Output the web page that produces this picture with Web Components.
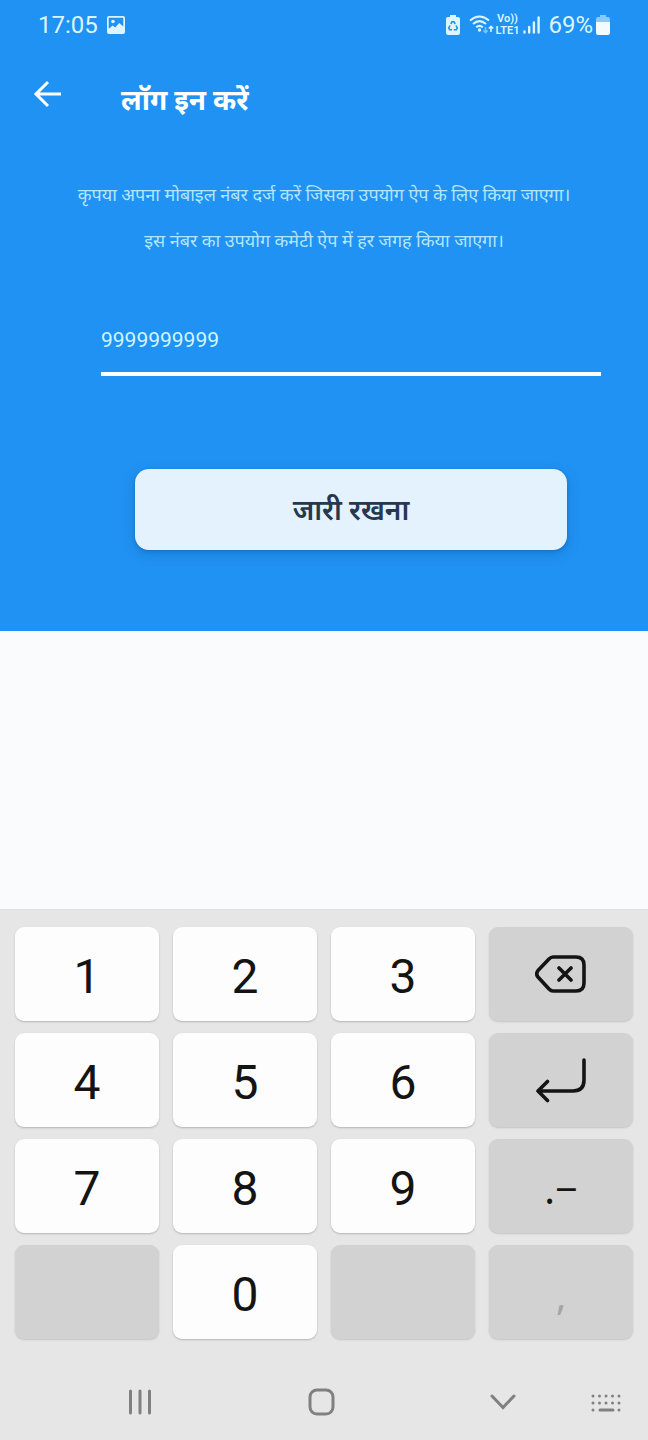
<!DOCTYPE html>
<html lang="hi">
<head>
<meta charset="utf-8">
<meta name="viewport" content="width=device-width, initial-scale=1">
<title>लॉग इन करें</title>
<style>
  html, body { margin: 0; min-height: 100%; }
  body { background: #fafbfd; font-family: Roboto, "Noto Sans Devanagari", "Noto Sans", sans-serif; }
</style>
</head>
<body>
<phone-screen>
  <status-bar slot="top"></status-bar>
  <page-header slot="top">लॉग इन करें</page-header>
  <login-form slot="top"></login-form>
  <num-pad slot="bottom"></num-pad>
  <nav-bar slot="bottom"></nav-bar>
</phone-screen>
<script>
  const define = (name, html, setup) => {
    const template = document.createElement('template');
    template.innerHTML = html;
    customElements.define(name, class extends HTMLElement {
      constructor() {
        super();
        this.attachShadow({ mode: 'open' }).append(template.content.cloneNode(true));
      }
      connectedCallback() { if (setup) setup(this); }
    });
  };

  define('phone-screen', `
    <style>
      :host { display: flex; flex-direction: column; min-height: 100vh; }
      header { background: #2092f3; color: #fff; padding-bottom: 81px; }
      main { flex: 1; }
      footer { background: #e6e6e6; border-top: 1px solid #dcdfe1; }
    </style>
    <header><slot name="top"></slot></header>
    <main></main>
    <footer><slot name="bottom"></slot></footer>`);

  define('status-bar', `
    <style>
      :host { display: flex; align-items: center; height: 50px; padding: 0 38px; color: #dcf5ff; font-size: 24px; line-height: 28px; }
      svg { display: block; flex: none; }
      .photo { margin-left: 9px; }
      .right { margin-left: auto; display: flex; align-items: center; }
      .wifi { margin-left: 9px; }
      .volte { display: flex; flex-direction: column; align-items: center; font-size: 11px; line-height: 12px; font-weight: 600; margin-left: 2px; }
      .signal { margin: 0 8px 0 4px; }
      .battery { margin-left: 3px; }
    </style>
    <span>17:05</span>
    <svg class="photo" width="18" height="18" viewBox="0 0 18 18"><path fill="currentColor" fill-rule="evenodd" d="M2 0h14a2 2 0 0 1 2 2v14a2 2 0 0 1-2 2H2a2 2 0 0 1-2-2V2a2 2 0 0 1 2-2zm-.3 1.7v11.1l4-3.300 2.500 2 4-4.500 4.100 3.600V1.700z"/><circle cx="6" cy="5.500" r="1.800" fill="currentColor"/></svg>
    <div class="right">
      <svg width="14" height="20" viewBox="0 0 14 20"><path fill="currentColor" d="M4 0h6v2h2a2 2 0 0 1 2 2v14a2 2 0 0 1-2 2H2a2 2 0 0 1-2-2V4a2 2 0 0 1 2-2h2z"/><g fill="none" stroke="#2092f3" stroke-width="1.600"><path d="M4.800 9 6 6.800h2L9.200 9"/><path d="M10 10.500 11.300 13l-1 1.800H7.800"/><path d="M4 10.500 2.700 13l1 1.800H6"/></g></svg>
      <svg class="wifi" width="25" height="20" viewBox="0 0 25 20"><g fill="none" stroke="currentColor" stroke-width="2"><path d="M1 5.500Q10.500-2.500 20 5.500"/><path d="M4 9Q10.500 3.300 17 9"/><path d="M7.200 12.300q3.300-2.900 6.600 0"/></g><circle cx="10.500" cy="15" r="1.700" fill="currentColor"/><g fill="none" stroke="currentColor" stroke-width="1.600"><path opacity=".5" d="M16.500 12v5.500m-2.200-2 2.200 2.200 2.200-2.200"/><path d="M22 17v-5.500m-2.200 2 2.200-2.200 2.200 2.200"/></g></svg>
      <span class="volte"><span>Vo))</span><span>LTE1</span></span>
      <svg class="signal" width="17" height="18" viewBox="0 0 17 18"><path stroke="currentColor" stroke-width="2.400" stroke-linecap="round" d="M1.500 15.500v1M6.200 11v5.500M10.900 6.500v10M15.600 1.500v15"/></svg>
      <span>69%</span>
      <svg class="battery" width="14" height="20" viewBox="0 0 14 20"><path fill="#8ac8fa" d="M4 0h6v2h2a2 2 0 0 1 2 2v4H0V4a2 2 0 0 1 2-2h2z"/><path fill="#f2fbff" d="M0 7h14v11a2 2 0 0 1-2 2H2a2 2 0 0 1-2-2z"/></svg>
    </div>`);

  define('page-header', `
    <style>
      :host { display: flex; align-items: center; height: 88px; padding-left: 33px; }
      button { display: block; padding: 0; border: 0; background: none; color: inherit; margin-right: 58px; }
      svg { display: block; }
      h1 { margin: 14px 0 0; font-size: 28px; line-height: 40px; font-weight: 700; }
    </style>
    <button type="button" aria-label="वापस"><svg width="30" height="28" viewBox="0 0 30 28" fill="none" stroke="currentColor" stroke-width="3"><path d="M28 14H4M15 2 3 14l12 12"/></svg></button>
    <h1><slot></slot></h1>`);

  define('login-form', `
    <style>
      :host { display: block; }
      form { display: flex; flex-direction: column; padding-top: 34px; }
      p { margin: 0 24px; text-align: center; color: #b3e5fc; font-size: 18px; line-height: 46px; }
      input { display: block; box-sizing: border-box; margin: 52px 47px 0 101px; height: 60px; padding: 0 0 8px; border: 0; border-bottom: 4px solid #fff; border-radius: 0; background: none; outline: 0; color: #d3f6ff; font: 21px/28px Roboto, sans-serif; }
      button { margin: 93px 81px 0 135px; height: 81px; padding: 6px 0 0; border: 0; border-radius: 14px; background: #e3f2fd; color: #263850; font: inherit; font-size: 28px; font-weight: 600; box-shadow: 0 4px 12px #0d559959, 0 1px 3px #0d559966; }
    </style>
    <form>
      <p id="hint">कृपया अपना मोबाइल नंबर दर्ज करें जिसका उपयोग ऐप के लिए किया जाएगा।<br>इस नंबर का उपयोग कमेटी ऐप में हर जगह किया जाएगा।</p>
      <input type="tel" value="9999999999" aria-labelledby="hint">
      <button type="button">जारी रखना</button>
    </form>`);

  define('pad-key', `
    <style>
      :host { display: block; }
      button { display: flex; align-items: center; justify-content: center; box-sizing: border-box; width: 100%; height: 94px; padding: 6px 0 0; border: 0; border-radius: 9px; background: #fdfdfd; color: #141414; font: 48px/56px Roboto, sans-serif; box-shadow: 0 1px 2px #00000038; }
      :host([dark]) button { background: #d2d2d2; box-shadow: 0 1px 2px #00000026; }
      :host([icon]) button { padding: 0; }
      :host([symbol]) button { font-family: "Noto Sans", sans-serif; font-size: 40px; }
      :host([dim]) button { color: #a6a6a6; }
    </style>
    <button type="button"><slot></slot></button>`, el => {
      const label = el.getAttribute('label');
      if (label) el.shadowRoot.querySelector('button').setAttribute('aria-label', label);
    });

  define('num-pad', `
    <style>
      :host { display: grid; grid-template-columns: repeat(4, 1fr); gap: 12px 14px; padding: 17px 15px 25px; }
      svg { display: block; fill: none; stroke: #141414; stroke-width: 3.600; stroke-linecap: round; stroke-linejoin: round; }
    </style>
    <pad-key>1</pad-key><pad-key>2</pad-key><pad-key>3</pad-key>
    <pad-key dark icon label="मिटाएँ"><svg width="52" height="40" viewBox="0 0 52 40"><path d="M18 3h23q8 0 8 8v18q0 8-8 8H18q-2 0-4-2L3 23q-2.500-3 0-6.500L14 5q2-2 4-2zM24 14l12 12m0-12-12 12"/></svg></pad-key>
    <pad-key>4</pad-key><pad-key>5</pad-key><pad-key>6</pad-key>
    <pad-key dark icon label="एंटर"><svg width="52" height="46" viewBox="0 0 52 46"><path d="M49 3v20q0 11-11 11H3M12.500 24.500 3 34l9.500 9.500"/></svg></pad-key>
    <pad-key>7</pad-key><pad-key>8</pad-key><pad-key>9</pad-key>
    <pad-key dark symbol>.−</pad-key>
    <pad-key dark label="खाली"></pad-key><pad-key>0</pad-key><pad-key dark label="खाली"></pad-key>
    <pad-key dark symbol dim>,</pad-key>`);

  define('nav-bar', `
    <style>
      :host { display: grid; grid-template-columns: 176fr 188fr 174fr 32px; align-items: center; height: 76px; padding: 0 26px 0 52px; }
      button { display: flex; justify-content: center; align-items: center; height: 48px; padding: 0; border: 0; background: none; color: #808080; }
      svg { display: block; fill: none; stroke: currentColor; stroke-width: 3; stroke-linecap: round; }
    </style>
    <button type="button" aria-label="हाल के ऐप"><svg width="26" height="28" viewBox="0 0 26 28"><path d="M3.500 3v22M13 3v22M22.500 3v22"/></svg></button>
    <button type="button" aria-label="होम"><svg width="28" height="28" viewBox="0 0 28 28"><rect x="2" y="2" width="23" height="24" rx="7"/></svg></button>
    <button type="button" aria-label="कीबोर्ड छिपाएँ"><svg width="26" height="16" viewBox="0 0 26 16"><path d="M2 2l11 11.500L24 2"/></svg></button>
    <button type="button" aria-label="कीबोर्ड बदलें"><svg width="32" height="20" viewBox="0 0 32 20"><path d="M3 4h0M9.500 4h0M16 4h0M22.500 4h0M29 4h0M3 11h0M9.500 11h0M16 11h0M22.500 11h0M29 11h0M3 18h0M10 18h13M29 18h0"/></svg></button>`);
</script>
</body>
</html>
